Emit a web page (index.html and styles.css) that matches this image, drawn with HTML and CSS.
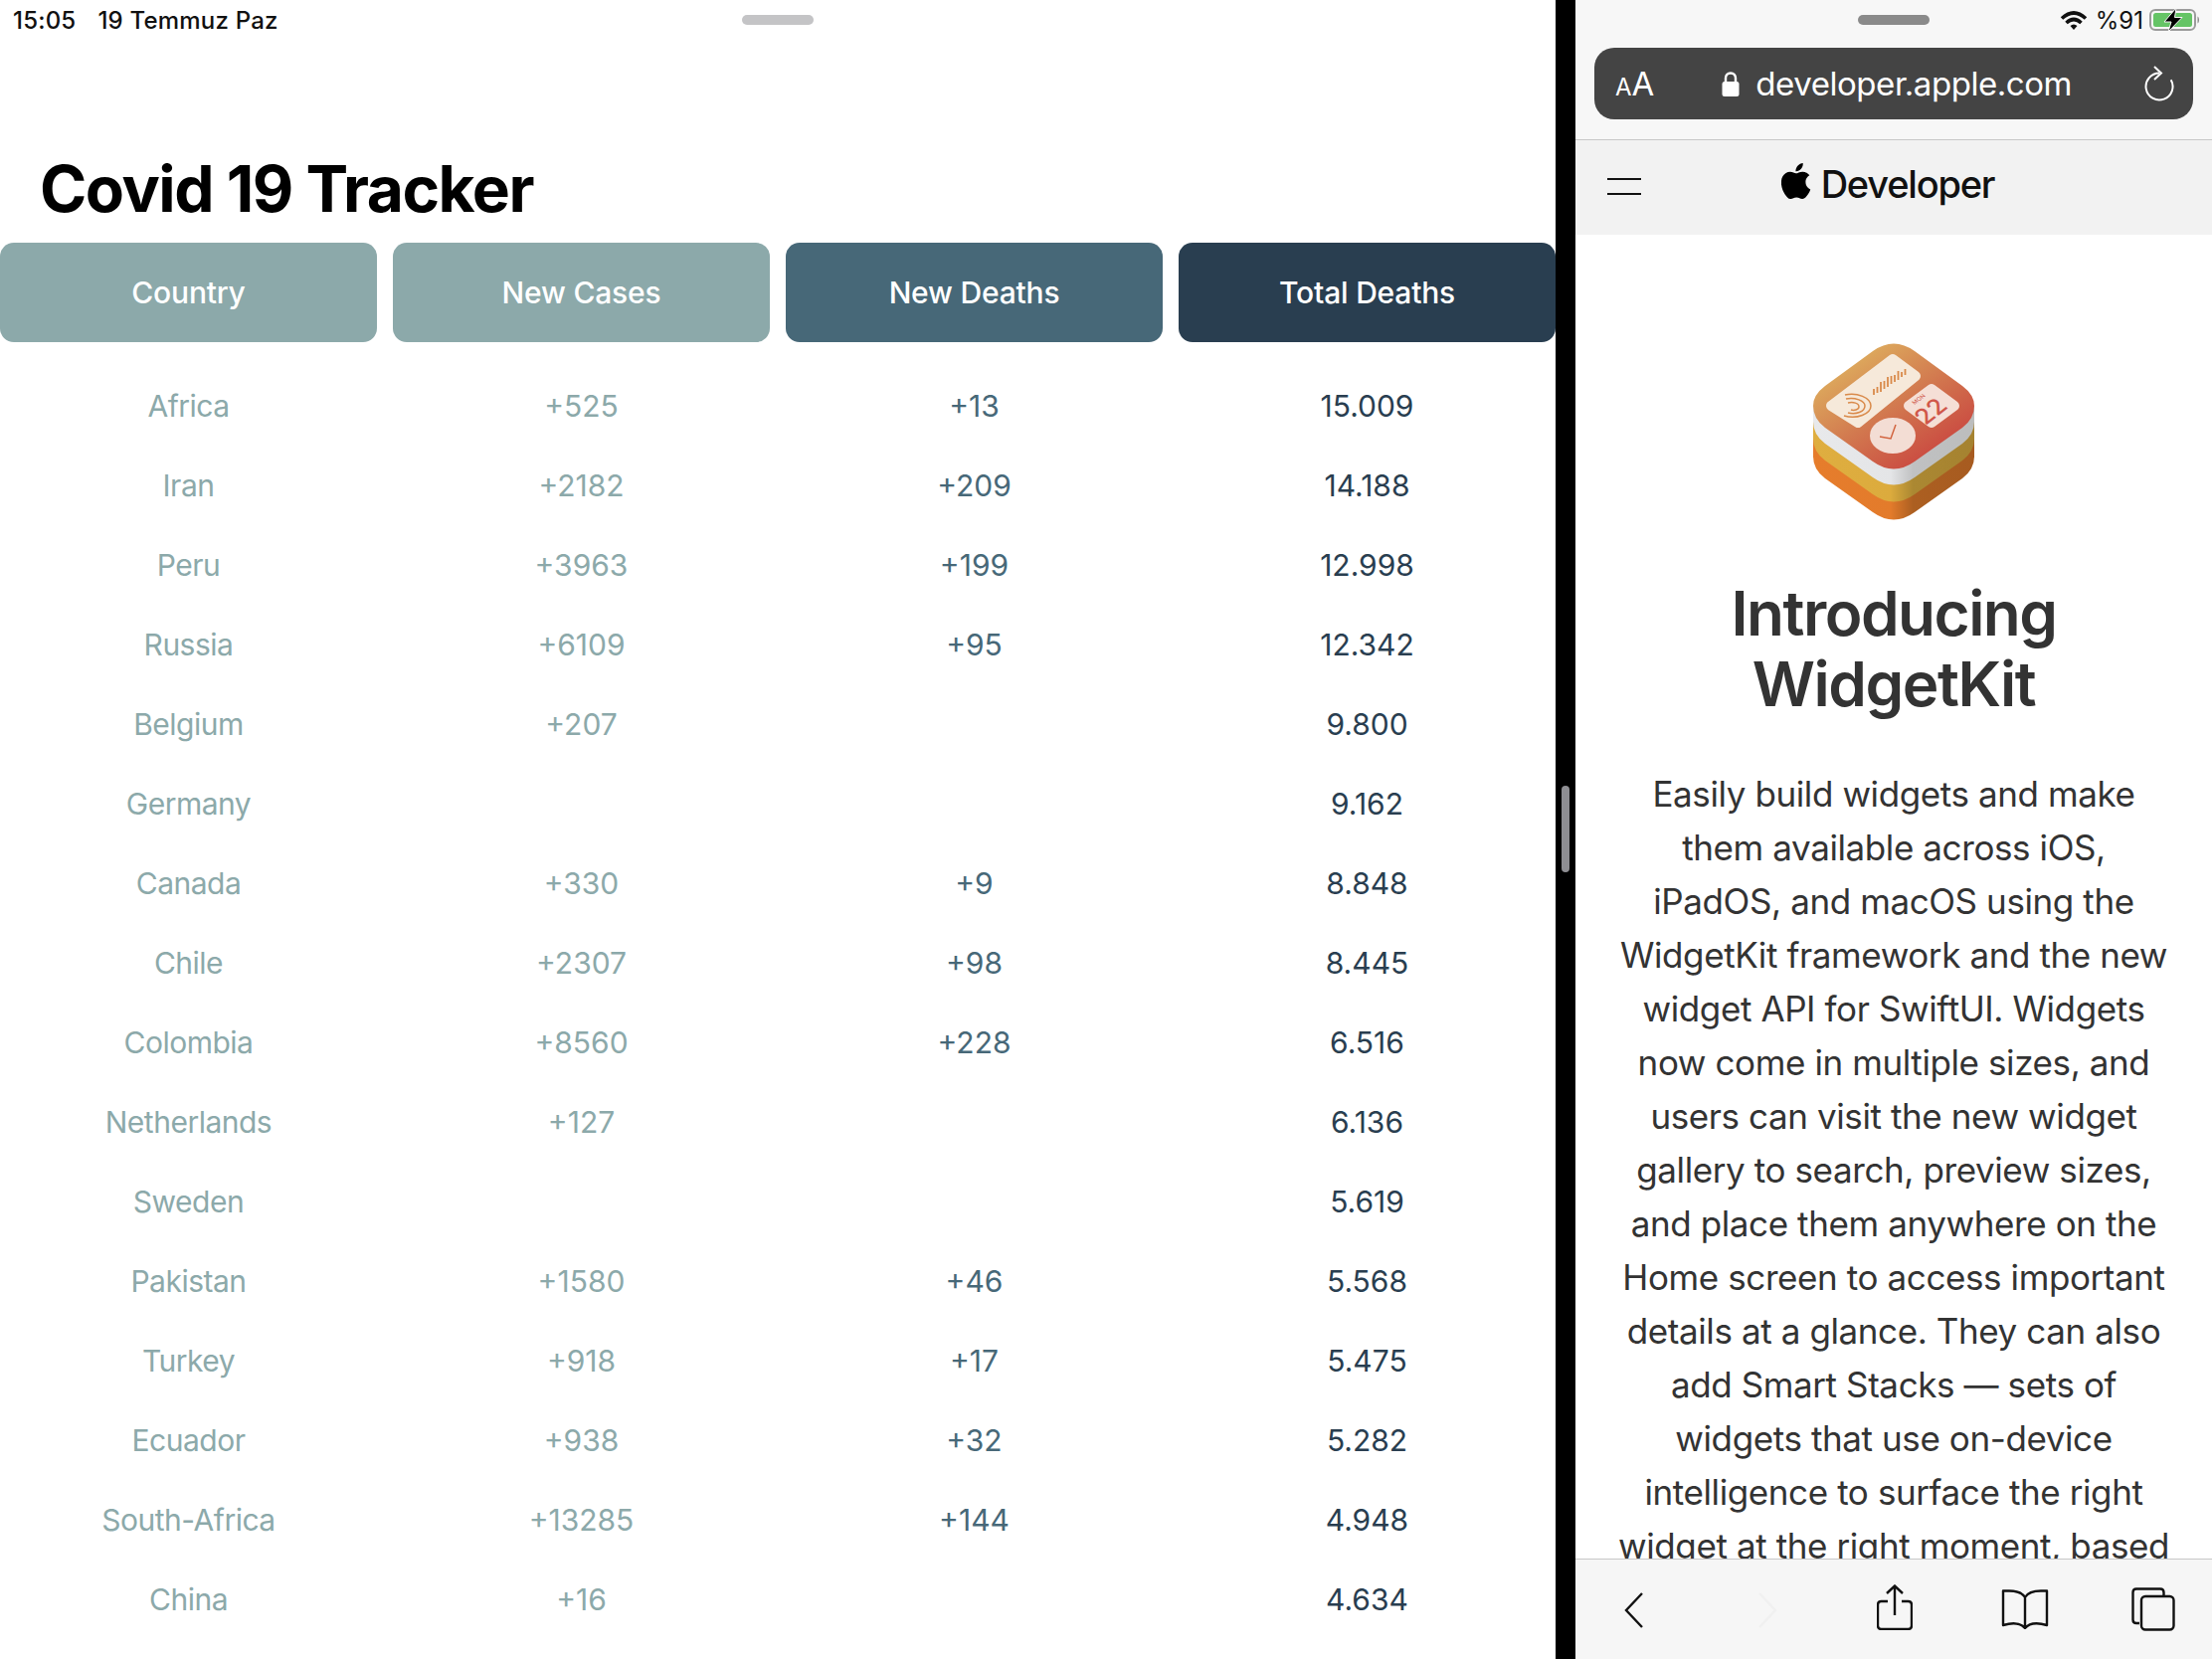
FILE: index.html
```html
<!DOCTYPE html>
<html lang="en">
<head>
    <meta charset="UTF-8">
    <title>Covid 19 Tracker</title>
    <link rel="stylesheet" href="styles.css">
</head>
<body>
    <div class="screen">
        <main class="tracker">
            <div class="status-left">
                <span>15:05</span>
                <span>19 Temmuz Paz</span>
                <div class="grabber grabber-light"></div>
            </div>
            <h1>Covid 19 Tracker</h1>
            <div class="table-row table-head">
                <div class="head-cell head-light">Country</div>
                <div class="head-cell head-light">New Cases</div>
                <div class="head-cell head-mid">New Deaths</div>
                <div class="head-cell head-dark">Total Deaths</div>
            </div>
            <div class="table-body">
                <div class="table-row"><div class="c1">Africa</div><div class="c2">+525</div><div class="c3">+13</div><div class="c4">15.009</div></div>
                <div class="table-row"><div class="c1">Iran</div><div class="c2">+2182</div><div class="c3">+209</div><div class="c4">14.188</div></div>
                <div class="table-row"><div class="c1">Peru</div><div class="c2">+3963</div><div class="c3">+199</div><div class="c4">12.998</div></div>
                <div class="table-row"><div class="c1">Russia</div><div class="c2">+6109</div><div class="c3">+95</div><div class="c4">12.342</div></div>
                <div class="table-row"><div class="c1">Belgium</div><div class="c2">+207</div><div class="c3"></div><div class="c4">9.800</div></div>
                <div class="table-row"><div class="c1">Germany</div><div class="c2"></div><div class="c3"></div><div class="c4">9.162</div></div>
                <div class="table-row"><div class="c1">Canada</div><div class="c2">+330</div><div class="c3">+9</div><div class="c4">8.848</div></div>
                <div class="table-row"><div class="c1">Chile</div><div class="c2">+2307</div><div class="c3">+98</div><div class="c4">8.445</div></div>
                <div class="table-row"><div class="c1">Colombia</div><div class="c2">+8560</div><div class="c3">+228</div><div class="c4">6.516</div></div>
                <div class="table-row"><div class="c1">Netherlands</div><div class="c2">+127</div><div class="c3"></div><div class="c4">6.136</div></div>
                <div class="table-row"><div class="c1">Sweden</div><div class="c2"></div><div class="c3"></div><div class="c4">5.619</div></div>
                <div class="table-row"><div class="c1">Pakistan</div><div class="c2">+1580</div><div class="c3">+46</div><div class="c4">5.568</div></div>
                <div class="table-row"><div class="c1">Turkey</div><div class="c2">+918</div><div class="c3">+17</div><div class="c4">5.475</div></div>
                <div class="table-row"><div class="c1">Ecuador</div><div class="c2">+938</div><div class="c3">+32</div><div class="c4">5.282</div></div>
                <div class="table-row"><div class="c1">South-Africa</div><div class="c2">+13285</div><div class="c3">+144</div><div class="c4">4.948</div></div>
                <div class="table-row"><div class="c1">China</div><div class="c2">+16</div><div class="c3"></div><div class="c4">4.634</div></div>
            </div>
        </main>

        <div class="divider"><div class="divider-handle"></div></div>

        <section class="safari">
            <header class="safari-top">
                <div class="status-right">
                    <div class="grabber grabber-dark"></div>
                    <div class="status-icons">
                        <svg class="wifi" viewBox="0 0 28 20"><path d="M2 8.500Q14 -2.500 26 8.500" fill="none" stroke="#111" stroke-width="3.600"/><path d="M6.500 13Q14 6 21.500 13" fill="none" stroke="#111" stroke-width="3.600"/><path d="M10.500 16Q14 13 17.500 16L14 20Z" fill="#111"/></svg>
                        <span class="percent">%91</span>
                        <svg class="battery" viewBox="0 0 52 24"><rect x="1" y="2" width="45" height="20" rx="5" fill="none" stroke="#9b9b9b" stroke-width="2"/><rect x="4" y="5" width="39" height="14" rx="2.500" fill="#65c466"/><path d="M48.500 8.500C50.500 9.500 50.500 14.500 48.500 15.500Z" fill="#8a8a8a"/><path d="M27 0L15 14H22L19 24L33 9.500H25.500Z" fill="#000" stroke="#f7f7f7" stroke-width="1"/></svg>
                    </div>
                </div>
                <div class="address-bar">
                    <span class="aa"><small>A</small>A</span>
                    <span class="url">
                        <svg class="lock" viewBox="0 0 18 25"><path d="M4 11V6.500C4 3.500 6 1.500 9 1.500S14 3.500 14 6.500V11" fill="none" stroke="#fff" stroke-width="2.400"/><rect x="0.500" y="10" width="17" height="15" rx="2.500" fill="#fff"/></svg>
                        developer.apple.com
                    </span>
                    <svg class="reload" viewBox="0 0 30 36"><path d="M26.700 14.200A13.500 13.500 0 1 1 15 7.500" fill="none" stroke="#fff" stroke-width="2"/><path d="M10 1L17 7.500L10 14" fill="none" stroke="#fff" stroke-width="2"/></svg>
                </div>
            </header>
            <nav class="dev-nav">
                <div class="burger"></div>
                <div class="dev-logo">
                    <svg class="apple" viewBox="0 0 20 24"><path transform="translate(-2.300 0)" d="M12.152 6.896c-.948 0-2.415-1.078-3.960-1.040-2.040.027-3.910 1.183-4.961 3.014-2.117 3.675-.546 9.103 1.519 12.090 1.013 1.454 2.208 3.090 3.792 3.039 1.520-.065 2.090-.987 3.935-.987 1.831 0 2.350.987 3.960.948 1.637-.026 2.676-1.480 3.676-2.948 1.156-1.688 1.636-3.325 1.662-3.415-.039-.013-3.182-1.221-3.220-4.857-.026-3.040 2.480-4.494 2.597-4.559-1.429-2.090-3.623-2.324-4.390-2.376-2-.156-3.675 1.090-4.610 1.090zM15.530 3.830c.843-1.012 1.400-2.427 1.245-3.830-1.207.052-2.662.805-3.532 1.818-.780.896-1.454 2.338-1.273 3.714 1.338.104 2.715-.688 3.559-1.701"/></svg>
                    <span>Developer</span>
                </div>
            </nav>
            <article class="article">
                <svg class="widget-icon" viewBox="0 0 162 178">
                    <defs>
                        <linearGradient id="topface" x1="0.150" y1="0.100" x2="0.850" y2="0.900"><stop offset="0" stop-color="#dfb25f"/><stop offset="0.500" stop-color="#d2794f"/><stop offset="1" stop-color="#c9433f"/></linearGradient>
                        <linearGradient id="white-side"><stop offset="0" stop-color="#e8e9eb"/><stop offset="0.480" stop-color="#e4e5e7"/><stop offset="0.620" stop-color="#c0c1c2"/><stop offset="1" stop-color="#bcbdbd"/></linearGradient>
                        <linearGradient id="yellow-side"><stop offset="0" stop-color="#dfae40"/><stop offset="0.480" stop-color="#dcab3d"/><stop offset="0.620" stop-color="#ab8832"/><stop offset="1" stop-color="#a58230"/></linearGradient>
                        <linearGradient id="orange-side"><stop offset="0" stop-color="#e67d2c"/><stop offset="0.480" stop-color="#e37b2b"/><stop offset="0.620" stop-color="#ac5f21"/><stop offset="1" stop-color="#a75b20"/></linearGradient>
                        <path id="slab" d="M60 8Q81 -7 102 8L150 43Q162 52 162 63Q162 76 150 85L102 119Q81 134 60 119L12 85Q0 76 0 63Q0 52 12 43Z"/>
                    </defs>
                    <rect y="63" width="162" height="52" fill="url(#orange-side)"/>
                    <use href="#slab" y="51" fill="url(#orange-side)"/>
                    <rect y="63" width="162" height="34" fill="url(#yellow-side)"/>
                    <use href="#slab" y="33" fill="url(#yellow-side)"/>
                    <rect y="63" width="162" height="16" fill="url(#white-side)"/>
                    <use href="#slab" y="16" fill="url(#white-side)"/>
                    <use href="#slab" fill="url(#topface)"/>
                    <polygon points="80,16 103,33 45,80 18,63" fill="#f6e9da" stroke="#f6e9da" stroke-width="10" stroke-linejoin="round"/>
                    <polygon points="119,46 142,63 119,80 96,63" fill="#f5dfd6" stroke="#f5dfd6" stroke-width="10" stroke-linejoin="round"/>
                    <ellipse cx="80" cy="93" rx="23" ry="18" fill="#f3ddd4"/>
                    <path d="M67 94L78 96L83 82" fill="none" stroke="#d2643f" stroke-width="1.500"/>
                    <g fill="none" stroke="#d98a4a" stroke-width="1.500">
                        <path d="M32 52C44 49 58 55 58 63C58 71 44 77 31 73"/>
                        <path d="M33 56C42 54 52 58 52 63C52 69 43 72 35 70"/>
                        <path d="M35 60C40 59 46 60 46 64C46 67 41 68 38 67"/>
                        <path stroke-width="1.800" d="M61 52V46M64.500 50V44M68 49V39M71.500 46V38M75 44V34M78.500 41V33M82 39V32M85.500 37V28M89 34V29M92.500 32V26"/>
                    </g>
                    <text class="icon-day" transform="matrix(.77 -.6 .77 .6 113 83)">22</text>
                    <text class="icon-mon" transform="matrix(.77 -.6 .77 .6 102 62)">MON</text>
                </svg>
                <h2>Introducing<br>WidgetKit</h2>
                <p>Easily build widgets and make<br>them available across iOS,<br>iPadOS, and macOS using the<br>WidgetKit framework and the new<br>widget API for SwiftUI. Widgets<br>now come in multiple sizes, and<br>users can visit the new widget<br>gallery to search, preview sizes,<br>and place them anywhere on the<br>Home screen to access important<br>details at a glance. They can also<br>add Smart Stacks — sets of<br>widgets that use on-device<br>intelligence to surface the right<br>widget at the right moment, based</p>
            </article>
            <footer class="safari-bottom">
                <svg class="tool tool-back" viewBox="0 0 20 36"><path d="M18 1L2 18L18 35" fill="none" stroke="#111" stroke-width="2.400"/></svg>
                <svg class="tool tool-forward" viewBox="0 0 20 36"><path d="M2 1L18 18L2 35" fill="none" stroke="#f0f0f0" stroke-width="2.400"/></svg>
                <svg class="tool tool-share" viewBox="0 0 36 46"><path d="M11 17H4.500Q1 17 1 20.500V41.500Q1 45 4.500 45H31.500Q35 45 35 41.500V20.500Q35 17 31.500 17H25" fill="none" stroke="#111" stroke-width="2.400"/><path d="M18 31V2M10 9L18 1.500L26 9" fill="none" stroke="#111" stroke-width="2.400"/></svg>
                <svg class="tool tool-book" viewBox="0 0 48 40"><path d="M24 8C21 3 15 1.500 8 1.500H2V36C9 34 19 33 24 39C29 33 39 34 46 36V1.500H40C33 1.500 27 3 24 8ZM24 8V39" fill="none" stroke="#111" stroke-width="2.400" stroke-linejoin="round"/></svg>
                <svg class="tool tool-tabs" viewBox="0 0 44 44"><path d="M8 36H5Q1.500 36 1.500 32.500V5Q1.500 1.500 5 1.500H29Q32.500 1.500 32.500 5V8" fill="none" stroke="#111" stroke-width="2.400"/><rect x="10" y="9" width="32.500" height="33.500" rx="4" fill="none" stroke="#111" stroke-width="2.400"/></svg>
            </footer>
        </section>
    </div>
</body>
</html>
```

FILE: styles.css
```css
* {
    box-sizing: border-box;
}

html, body {
    margin: 0;
    height: 100%;
    overflow: hidden;
    background: #fff;
    font-family: Inter, "Liberation Sans", sans-serif;
}

.screen {
    display: flex;
    width: 2224px;
    height: 1668px;
}

/* left app */
.tracker {
    width: 1564px;
    height: 1668px;
    overflow: hidden;
    background: #fff;
}

.status-left {
    position: relative;
    display: flex;
    align-items: center;
    gap: 22px;
    height: 40px;
    padding-left: 13px;
    font-size: 24px;
    font-weight: 500;
    letter-spacing: 0.2px;
    color: #111;
}

.grabber {
    position: absolute;
    top: 15px;
    width: 72px;
    height: 10px;
    border-radius: 5px;
}

.grabber-light {
    left: 746px;
    background: #c4c4c6;
}

.grabber-dark {
    left: 265px;
    background: #8a8a8a;
}

h1 {
    margin: 0;
    height: 204px;
    padding: 108px 0 0 40px;
    font-size: 64px;
    line-height: 84px;
    font-weight: 700;
    letter-spacing: -1.5px;
    color: #000;
}

.table-row {
    display: grid;
    grid-template-columns: repeat(4, 379px);
    gap: 16px;
    align-items: center;
    height: 80px;
    text-align: center;
    font-size: 30px;
}

.table-head {
    height: 100px;
    font-size: 30px;
    font-weight: 500;
    letter-spacing: -0.2px;
    color: #fff;
}

.head-cell {
    height: 100px;
    line-height: 100px;
    border-radius: 14px;
}

.head-light {
    background: #8ca9aa;
}

.head-mid {
    background: #476878;
}

.head-dark {
    background: #293e50;
}

.table-body {
    padding-top: 24px;
}

.c1 {
    letter-spacing: -0.5px;
}

.c1, .c2 {
    color: #8ca9aa;
}

.c3 {
    color: #476878;
}

.c4 {
    color: #293e50;
}

.divider {
    position: relative;
    width: 20px;
    height: 1668px;
    background: #000;
}

.divider-handle {
    position: absolute;
    left: 6px;
    top: 790px;
    width: 8px;
    height: 87px;
    border-radius: 4px;
    background: #8e8e93;
}

/* safari pane */
.safari {
    display: flex;
    flex-direction: column;
    width: 640px;
    height: 1668px;
    overflow: hidden;
}

.safari-top {
    height: 141px;
    padding: 0 19px;
    background: #f7f7f7;
    border-bottom: 1px solid #c8c8c8;
}

.status-right {
    position: relative;
    height: 48px;
}

.status-icons {
    position: absolute;
    top: 8px;
    right: -8px;
    display: flex;
    align-items: center;
    height: 24px;
    font-size: 24px;
    color: #111;
}

.wifi {
    width: 28px;
    height: 20px;
    margin-right: 8px;
}

.battery {
    width: 52px;
    height: 24px;
    margin-left: 6px;
}

.address-bar {
    display: flex;
    align-items: center;
    justify-content: space-between;
    width: 602px;
    height: 72px;
    padding: 0 19px 0 21px;
    border-radius: 20px;
    background: #444;
    color: #fff;
}

.aa {
    font-size: 33px;
    line-height: 1;
}

.aa small {
    font-size: 24px;
}

.url {
    display: flex;
    align-items: center;
    gap: 16px;
    margin-left: -5px;
    font-size: 33px;
    letter-spacing: -0.45px;
}

.lock {
    width: 18px;
    height: 25px;
}

.reload {
    width: 30px;
    height: 36px;
}

.dev-nav {
    position: relative;
    display: flex;
    align-items: center;
    justify-content: center;
    height: 95px;
    background: #f2f2f2;
}

.burger {
    position: absolute;
    left: 32px;
    top: 38px;
    width: 34px;
    height: 17px;
    border-top: 2px solid #111;
    border-bottom: 2px solid #111;
}

.dev-logo {
    display: flex;
    align-items: center;
    gap: 10px;
    margin: -7px 0 0 -12px;
    font-size: 38px;
    font-weight: 500;
    letter-spacing: -1.2px;
    color: #111;
}

.apple {
    width: 30px;
    height: 36px;
    margin-top: -6px;
}

.article {
    flex: 1;
    min-height: 0;
    overflow: hidden;
    padding-top: 109px;
    text-align: center;
    color: #333;
}

.widget-icon {
    display: block;
    width: 162px;
    height: 178px;
    margin: 0 auto;
}

.icon-day {
    font-size: 25px;
    font-weight: 500;
    fill: #d0574a;
}

.icon-mon {
    font-size: 6px;
    fill: #d0574a;
}

.article h2 {
    margin: 58px 0 0;
    font-size: 62px;
    line-height: 71px;
    font-weight: 600;
    letter-spacing: -1.5px;
}

.article p {
    margin: 48px 0 0;
    font-size: 35px;
    line-height: 54px;
    letter-spacing: -0.4px;
    white-space: nowrap;
}

.safari-bottom {
    position: relative;
    flex: none;
    height: 101px;
    background: #f6f6f6;
    border-top: 1px solid #c8c8c8;
}

/* toolbar glyphs sit at fixed spots over the bar */
.tool {
    position: absolute;
}

.tool-back {
    left: 49px;
    top: 33px;
    width: 20px;
    height: 36px;
}

.tool-forward {
    left: 183px;
    top: 33px;
    width: 20px;
    height: 36px;
}

.tool-share {
    left: 303px;
    top: 25px;
    width: 36px;
    height: 46px;
}

.tool-book {
    left: 428px;
    top: 30px;
    width: 48px;
    height: 40px;
}

.tool-tabs {
    left: 559px;
    top: 28px;
    width: 44px;
    height: 44px;
}
```
